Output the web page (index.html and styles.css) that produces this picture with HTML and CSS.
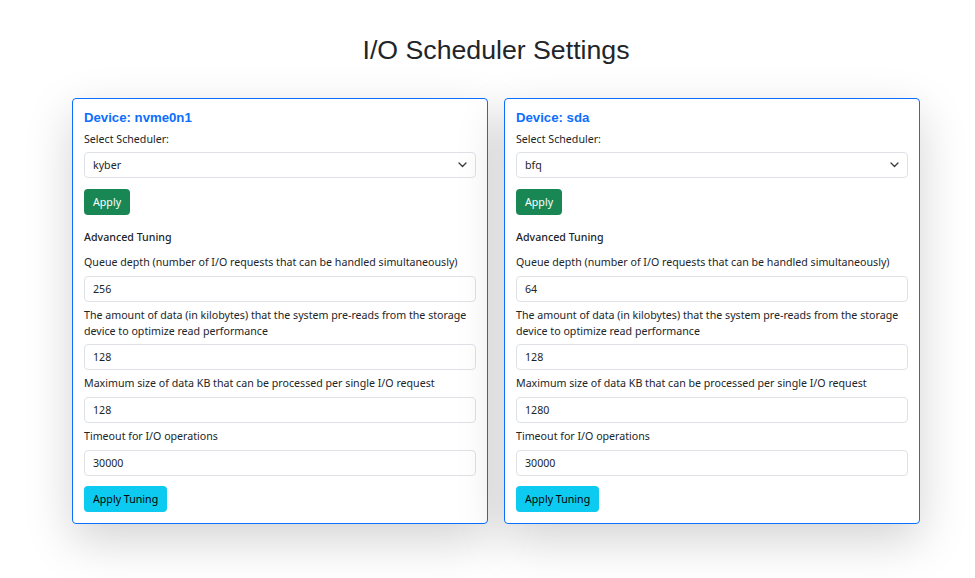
FILE: index.html
```html
<!DOCTYPE html>
<html>
<head>
<meta charset="utf-8">
<link rel="stylesheet" href="styles.css">
</head>
<body>
<main class="page">
  <h1 class="title">I/O Scheduler Settings</h1>
  <div class="cards">
    <section class="card">
      <h2 class="device">Device: nvme0n1</h2>
      <div class="label">Select Scheduler:</div>
      <div class="select"><span>kyber</span>
        <svg width="9" height="6" viewBox="0 0 9 6"><path d="M1 1l3.5 3.5L8 1" fill="none" stroke="#343a40" stroke-width="1.3" stroke-linecap="round" stroke-linejoin="round"/></svg>
      </div>
      <div class="btn-row"><button class="btn btn-green">Apply</button></div>
      <div class="adv">Advanced Tuning</div>
      <div class="group">
        <div class="label">Queue depth (number of I/O requests that can be handled simultaneously)</div>
        <div class="input">256</div>
      </div>
      <div class="group">
        <div class="label two">The amount of data (in kilobytes) that the system pre-reads from the storage device to optimize read performance</div>
        <div class="input">128</div>
      </div>
      <div class="group">
        <div class="label">Maximum size of data KB that can be processed per single I/O request</div>
        <div class="input">128</div>
      </div>
      <div class="group">
        <div class="label">Timeout for I/O operations</div>
        <div class="input">30000</div>
      </div>
      <div class="btn-row tune"><button class="btn btn-cyan">Apply Tuning</button></div>
    </section>
    <section class="card">
      <h2 class="device">Device: sda</h2>
      <div class="label">Select Scheduler:</div>
      <div class="select"><span>bfq</span>
        <svg width="9" height="6" viewBox="0 0 9 6"><path d="M1 1l3.5 3.5L8 1" fill="none" stroke="#343a40" stroke-width="1.3" stroke-linecap="round" stroke-linejoin="round"/></svg>
      </div>
      <div class="btn-row"><button class="btn btn-green">Apply</button></div>
      <div class="adv">Advanced Tuning</div>
      <div class="group">
        <div class="label">Queue depth (number of I/O requests that can be handled simultaneously)</div>
        <div class="input">64</div>
      </div>
      <div class="group">
        <div class="label two">The amount of data (in kilobytes) that the system pre-reads from the storage device to optimize read performance</div>
        <div class="input">128</div>
      </div>
      <div class="group">
        <div class="label">Maximum size of data KB that can be processed per single I/O request</div>
        <div class="input">1280</div>
      </div>
      <div class="group">
        <div class="label">Timeout for I/O operations</div>
        <div class="input">30000</div>
      </div>
      <div class="btn-row tune"><button class="btn btn-cyan">Apply Tuning</button></div>
    </section>
  </div>
</main>
</body>
</html>
```
FILE: styles.css
```css
* { box-sizing: border-box; }
html, body { margin: 0; padding: 0; background: #fff; }
body {
  padding-left: 17px;
  font-family: "Noto Sans", sans-serif;
  font-size: 10.65px;
  color: #212529;
}
.page { width: 848px; margin: 0 auto; padding-bottom: 54px; }
.title {
  font-family: "Liberation Sans", Arial, sans-serif;
  font-weight: normal;
  font-size: 26.7px;
  line-height: 30px;
  margin: 0;
  padding-top: 35px;
  height: 98px;
  text-align: center;
  color: #212529;
}
.cards {
  display: grid;
  grid-template-columns: 1fr 1fr;
  gap: 16px;
}
.card {
  border: 1px solid #0d6efd;
  border-radius: 4px;
  padding: 11px;
  background: #fff;
  box-shadow: 0 16px 48px rgba(0,0,0,0.175);
}
.device {
  font-family: "Liberation Sans", Arial, sans-serif;
  font-weight: bold;
  font-size: 13.2px;
  line-height: 16px;
  color: #0d6efd;
  margin: 0 0 5px 0;
}
.label { line-height: 16px; margin-bottom: 5px; }
.select, .input {
  height: 26px;
  border: 1px solid #dee2e6;
  border-radius: 4px;
  padding: 0 8px;
  display: flex;
  align-items: center;
  background: #fff;
}
.select { justify-content: space-between; padding-right: 8px; }
.select svg { display: block; }
.btn-row { display: flex; margin-top: 11px; }
.btn {
  font-family: "Noto Sans", sans-serif;
  font-size: 10.65px;
  height: 26px;
  padding: 0 9px;
  border: none;
  border-radius: 4px;
}
.btn-green { background: #198754; color: #fff; }
.btn-cyan { background: #0dcaf0; color: #000; }
.adv { font-weight: 500; line-height: 16px; margin-top: 14px; margin-bottom: 9px; }
.group { margin-bottom: 5px; }
.group .label { margin-bottom: 6px; }
.group .label.two { margin-bottom: 5px; }
.tune { margin-top: 10px; }
```
